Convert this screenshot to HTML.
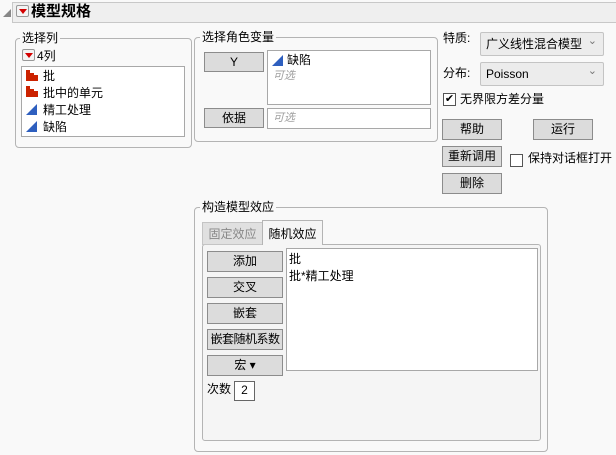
<!DOCTYPE html>
<html><head><meta charset="utf-8"><style>
*{box-sizing:border-box;margin:0;padding:0}
body{width:616px;height:455px;background:#f9f9f9;font-family:"Liberation Sans","Noto Sans CJK SC",sans-serif;font-size:12px;color:#000;position:relative;overflow:hidden}
.a{position:absolute}
.grp{position:absolute;border:1px solid #b4b4b4;border-radius:4px}
.lg{position:absolute;background:#f9f9f9;padding:0 2px;line-height:14px;font-size:12px}
.btn{position:absolute;background:#dcdcdc;border:1px solid #8c8c8c;text-align:center;line-height:18px;font-size:12px}
.box{position:absolute;background:#fff;border:1px solid #a8a8a8}
.red{position:absolute;width:13px;height:12px;border:1px solid #999;border-radius:2px;background:#f4f4f4}
.red:after{content:"";position:absolute;left:2px;top:3px;border-left:4px solid transparent;border-right:4px solid transparent;border-top:5px solid #d40000}
.ph{color:#a0a0a0;font-style:italic}
.sel{position:absolute;background:#ececec;border:1px solid #c4c4c4;border-radius:2px;padding-left:5px;line-height:22px;font-size:12px}
.sel:after{content:"⌄";position:absolute;right:6px;top:-3px;color:#777;font-size:11px}
.cb{position:absolute;width:13px;height:13px;border:1px solid #555;background:#fff}
</style></head><body>
<div class="a" style="left:3px;top:9px;width:0;height:0;border-left:8px solid transparent;border-bottom:8px solid #888"></div>
<div class="a" style="left:12px;top:2px;width:604px;height:21px;background:#efefef;border:1px solid #c8c8c8;border-right:none"></div>
<div class="red" style="left:16px;top:5px"></div>
<div class="a" style="left:31px;top:3px;font-size:15px;font-weight:bold;line-height:18px">模型规格</div>

<div class="grp" style="left:15px;top:38px;width:177px;height:110px"></div>
<div class="lg" style="left:20px;top:31px">选择列</div>
<div class="red" style="left:22px;top:49px"></div>
<div class="a" style="left:37px;top:49px;line-height:14px">4列</div>
<div class="box" style="left:21px;top:66px;width:164px;height:71px"></div>
<svg class="a" style="left:26px;top:70px" width="12" height="64">
<g fill="#cc2200"><rect x="0" y="0" width="4" height="11"/><rect x="4" y="3" width="4" height="8"/><rect x="8" y="5" width="4" height="6"/>
<rect x="0" y="16" width="4" height="11"/><rect x="4" y="19" width="4" height="8"/><rect x="8" y="21" width="4" height="6"/></g>
<g fill="#2e5fbf"><polygon points="0,45 11,34 11,45"/><polygon points="0,62 11,51 11,62"/></g></svg>
<div class="a" style="left:43px;top:68px;line-height:17px">批<br>批中的单元<br>精工处理<br>缺陷</div>

<div class="grp" style="left:194px;top:37px;width:244px;height:105px"></div>
<div class="lg" style="left:200px;top:30px">选择角色变量</div>
<div class="btn" style="left:204px;top:52px;width:60px;height:20px">Y</div>
<div class="box" style="left:267px;top:50px;width:164px;height:55px"></div>
<svg class="a" style="left:272px;top:55px" width="12" height="12"><polygon points="0,11 11,0 11,11" fill="#2e5fbf"/></svg>
<div class="a" style="left:287px;top:53px;line-height:15px">缺陷</div>
<div class="a ph" style="left:273px;top:69px;line-height:15px;font-size:11px">可选</div>
<div class="btn" style="left:204px;top:108px;width:60px;height:20px">依据</div>
<div class="box" style="left:267px;top:108px;width:164px;height:21px"></div>
<div class="a ph" style="left:273px;top:111px;line-height:15px;font-size:11px">可选</div>

<div class="a" style="left:443px;top:31px;line-height:14px">特质:</div>
<div class="sel" style="left:480px;top:32px;width:124px;height:24px">广义线性混合模型</div>
<div class="a" style="left:443px;top:66px;line-height:14px">分布:</div>
<div class="sel" style="left:480px;top:62px;width:124px;height:24px">Poisson</div>
<div class="cb" style="left:443px;top:93px;text-align:center;line-height:11px;font-size:11px">✔</div>
<div class="a" style="left:460px;top:92px;line-height:15px">无界限方差分量</div>
<div class="btn" style="left:442px;top:119px;width:60px;height:21px">帮助</div>
<div class="btn" style="left:533px;top:119px;width:60px;height:21px">运行</div>
<div class="btn" style="left:442px;top:146px;width:60px;height:21px">重新调用</div>
<div class="cb" style="left:510px;top:154px"></div>
<div class="a" style="left:528px;top:151px;line-height:15px">保持对话框打开</div>
<div class="btn" style="left:442px;top:173px;width:60px;height:21px">删除</div>

<div class="grp" style="left:194px;top:207px;width:354px;height:245px"></div>
<div class="lg" style="left:200px;top:200px">构造模型效应</div>
<div class="a" style="left:202px;top:244px;width:339px;height:197px;border:1px solid #b4b4b4;border-radius:3px;background:#f5f5f5"></div>
<div class="a" style="left:202px;top:222px;width:61px;height:23px;background:#e0e0e0;border:1px solid #c4c4c4;color:#888;line-height:22px;text-align:center">固定效应</div>
<div class="a" style="left:262px;top:220px;width:61px;height:25px;background:#f5f5f5;border:1px solid #b4b4b4;border-bottom:none;line-height:26px;text-align:center">随机效应</div>
<div class="btn" style="left:207px;top:251px;width:76px;height:21px">添加</div>
<div class="btn" style="left:207px;top:277px;width:76px;height:21px">交叉</div>
<div class="btn" style="left:207px;top:303px;width:76px;height:21px">嵌套</div>
<div class="btn" style="left:207px;top:329px;width:76px;height:21px;letter-spacing:-0.5px">嵌套随机系数</div>
<div class="btn" style="left:207px;top:355px;width:76px;height:21px">宏 ▾</div>
<div class="box" style="left:286px;top:248px;width:252px;height:123px"></div>
<div class="a" style="left:289px;top:251px;line-height:17px">批<br>批*精工处理</div>
<div class="a" style="left:207px;top:382px;line-height:15px">次数</div>
<div class="box" style="left:234px;top:381px;width:21px;height:20px;border-color:#666;text-align:center;line-height:17px">2</div>
</body></html>
